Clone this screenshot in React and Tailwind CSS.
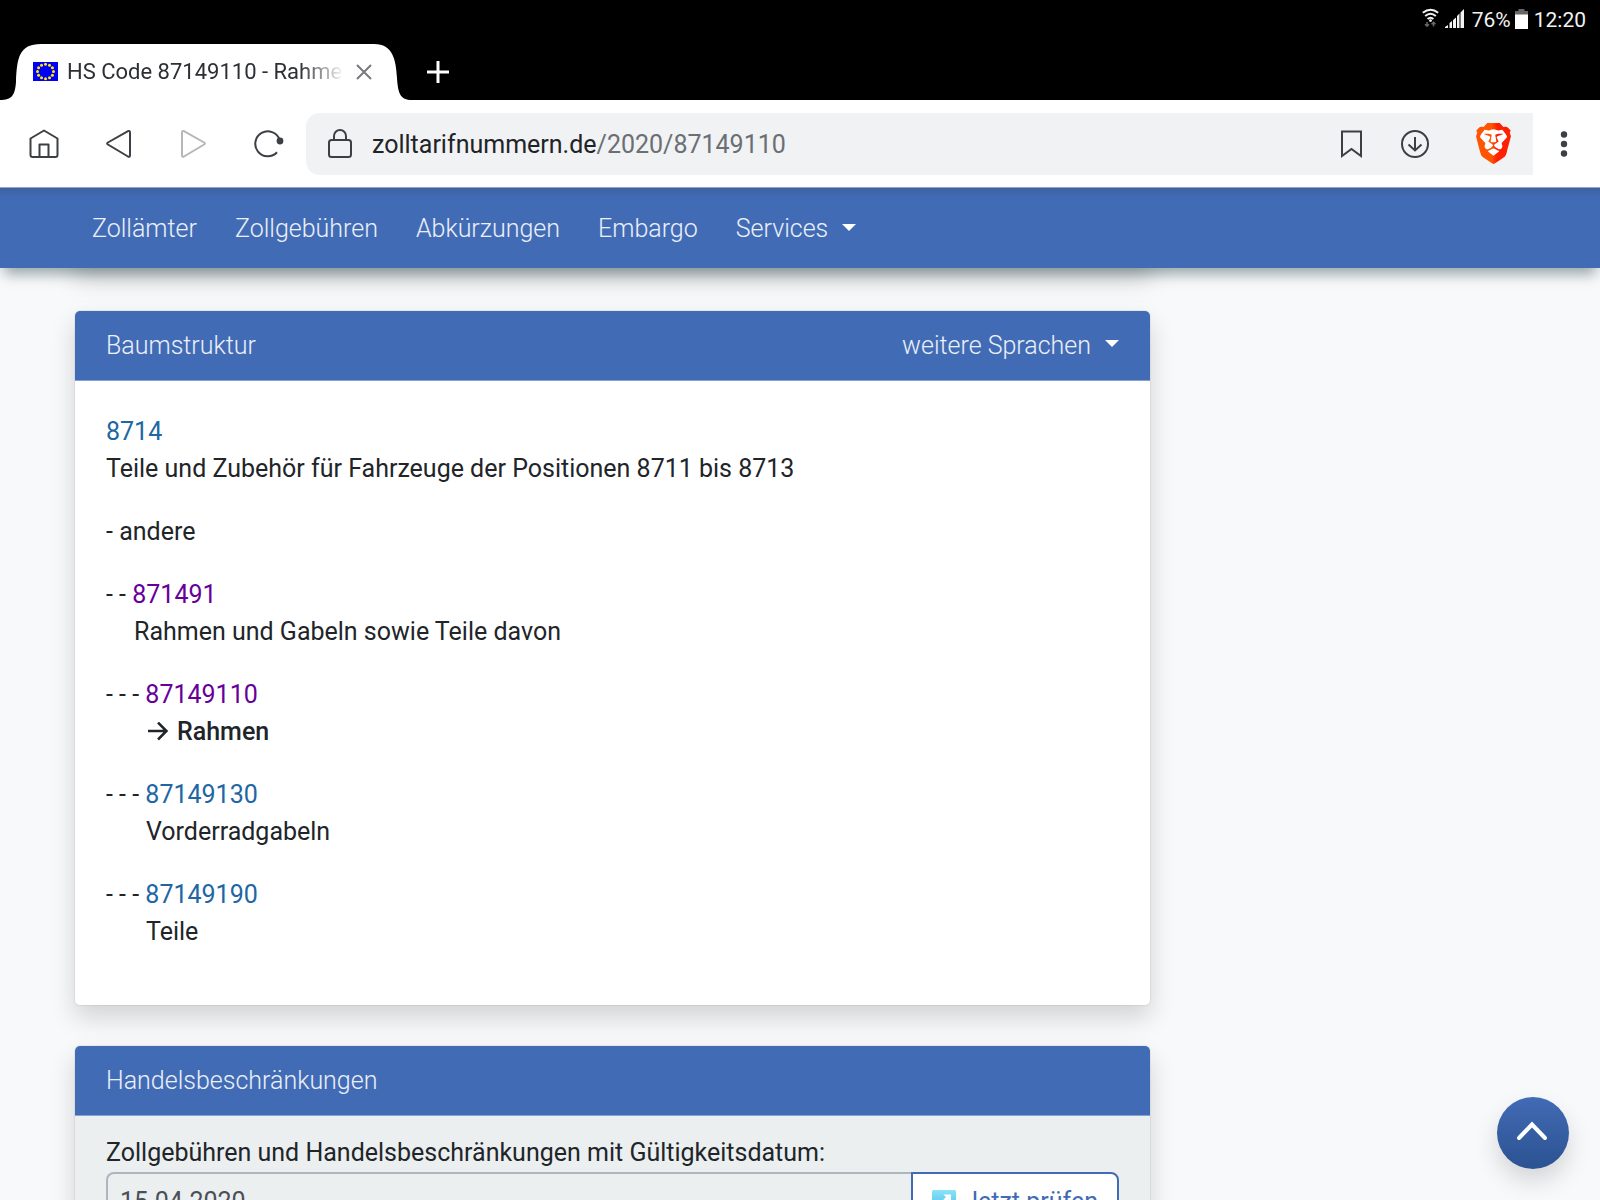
import { SiBrave } from 'react-icons/si';

const navItems = ['Zollämter', 'Zollgebühren', 'Abkürzungen', 'Embargo'];

const treeRows = [
  { prefix: '', code: '8714', text: 'Teile und Zubehör für Fahrzeuge der Positionen 8711 bis 8713', indent: 'pl-0' },
  { prefix: '-', text: 'andere' },
  { prefix: '- -', code: '871491', text: 'Rahmen und Gabeln sowie Teile davon', visited: true, indent: 'pl-7' },
  { prefix: '- - -', code: '87149110', text: 'Rahmen', visited: true, current: true, indent: 'pl-10' },
  { prefix: '- - -', code: '87149130', text: 'Vorderradgabeln', indent: 'pl-10' },
  { prefix: '- - -', code: '87149190', text: 'Teile', indent: 'pl-10' },
];

const Caret = () => <span className="mb-1 border-x-7 border-t-7 border-x-transparent border-t-white" />;

const EuFlag = () => (
  <svg width="25" height="19" viewBox="0 0 25 19" className="mb-0.5 shrink-0">
    <rect width="25" height="19" fill="#0000f5" />
    {Array.from({ length: 12 }, (_, i) => (
      <circle
        key={i}
        cx={12.5 + 8 * Math.sin((i * Math.PI) / 6)}
        cy={9.5 - 7.3 * Math.cos((i * Math.PI) / 6)}
        r="1.5"
        fill="#ffec00"
      />
    ))}
  </svg>
);

const StatusBar = () => (
  <div className="flex h-11 items-start justify-end pt-1 pr-3.5 text-[21px] leading-[32px] text-[#f2f2f2]">
    <svg width="17" height="20" viewBox="0 0 17 20" className="mt-1 mr-1.5" fill="none" stroke="#f2f2f2" strokeWidth="2">
      <path d="M0.8 4.8Q8.5-1.4 16.2 4.8M3.2 8Q8.5 3.4 13.8 8M5.6 11Q8.5 8.4 11.4 11" />
      <circle cx="8.5" cy="12.6" r="1.4" fill="#f2f2f2" stroke="none" />
      <path d="M5 14v4M3 16.3l2 2 2-2M11.5 18.5v-4M9.500 16.300l2-2 2 2" stroke="#666" strokeWidth="1.500" />
    </svg>
    <svg width="19" height="19" viewBox="0 0 19 19" className="mt-[5px] mr-2" fill="#f2f2f2">
      <path d="M0 19v-1l3-2v3zM4.500 19v-5l2.500-2v7zM8 19v-8l3-2.500V19zM12 19V7l2.500-2.500V19zM15.500 19V3.500L19 0v19z" />
    </svg>
    <span>76%</span>
    <svg width="13" height="20" viewBox="0 0 13 20" className="mt-[5px] mr-1.5 ml-1">
      <path d="M3.500 0h6v2H13v4H0V2h3.500z" fill="#666" />
      <path d="M0 5.500h13V20H0z" fill="#fff" />
    </svg>
    <span>12:20</span>
  </div>
);

const TabStrip = () => (
  <div className="flex h-14">
    <div className="relative flex w-103 items-center pl-[33px]">
      <svg className="absolute inset-0 h-full w-full" viewBox="0 0 412 56" preserveAspectRatio="none">
        <path d="M0 56C12 56 15 51 16 38C17 14 19 0 41 0H374C393 0 396 16 397 34C398 49 400 56 412 56Z" fill="#fff" />
      </svg>
      <div className="relative flex items-center">
        <EuFlag />
        <div className="ml-[9px] w-[277px] mask-r-from-84% text-[22px] leading-[30px] whitespace-nowrap text-[#2d2f33]">
          HS Code 87149110 - Rahme
        </div>
        <button aria-label="Tab schließen" className="ml-3">
          <svg width="16" height="16" viewBox="0 0 16 16" stroke="#777a7e" strokeWidth="2">
            <path d="M1 1l14 14M15 1L1 15" />
          </svg>
        </button>
      </div>
    </div>
    <button aria-label="Neuer Tab" className="ml-[15px]">
      <svg width="22" height="22" viewBox="0 0 22 22" stroke="#fff" strokeWidth="3">
        <path d="M11 0v22M0 11h22" />
      </svg>
    </button>
  </div>
);

const BraveLogo = () => (
  <span className="grid">
    <svg width="41" height="41" viewBox="0 0 24 24" className="col-start-1 row-start-1">
      <defs>
        <linearGradient id="brave" x1="0" x2="1">
          <stop offset="0.45" stopColor="#ff5500" />
          <stop offset="0.6" stopColor="#ff2000" />
        </linearGradient>
      </defs>
      <path d="M6 4h12l2 4-3 9-5 4-5-4-3-9z" fill="#fff" />
    </svg>
    <SiBrave size={41} style={{ fill: 'url(#brave)' }} className="col-start-1 row-start-1" />
  </span>
);

const Toolbar = () => (
  <div className="flex h-[87px] items-center bg-white pl-[29px] text-[#3c3f43]">
    <button aria-label="Startseite">
      <svg width="30" height="30" viewBox="0 0 30 30" fill="none" stroke="currentColor" strokeWidth="2" strokeLinejoin="round">
        <path d="M1.500 9.500 15 1.500l13.500 8V26a2 2 0 0 1-2 2h-23a2 2 0 0 1-2-2zM10.500 28V15.500h9V28" />
      </svg>
    </button>
    <button aria-label="Zurück" className="ml-[47px]">
      <svg width="26" height="30" viewBox="0 0 26 30" fill="none" stroke="currentColor" strokeWidth="2" strokeLinejoin="round">
        <path d="M22 2.200 1.900 13.500q-1.600 1 0 2L22 27.500q2 .9 2-1.300V3.500q0-2.200-2-1.300z" />
      </svg>
    </button>
    <button aria-label="Vorwärts" disabled className="ml-12 text-[#b5b7b9]">
      <svg width="26" height="30" viewBox="0 0 26 30" fill="none" stroke="currentColor" strokeWidth="2" strokeLinejoin="round">
        <path d="M4 2.200 24.100 13.500q1.600 1 0 2L4 27.500q-2 .9-2-1.300V3.500q0-2.200 2-1.300z" />
      </svg>
    </button>
    <button aria-label="Neu laden" className="ml-12">
      <svg width="30" height="28" viewBox="0 0 30 28" fill="none" stroke="currentColor" strokeWidth="2">
        <path d="M25.500 9.500A12.500 12.500 0 1 0 23 22.300" />
        <circle cx="26" cy="11" r="3.400" fill="currentColor" stroke="none" />
      </svg>
    </button>
    <div className="ml-[22px] flex h-[62px] flex-1 items-center rounded-l-[14px] bg-[#f1f2f4] pr-[19px]">
      <svg width="24" height="29" viewBox="0 0 24 29" className="ml-[22px]" fill="none" stroke="currentColor" strokeWidth="2">
        <rect x="1" y="11" width="22" height="17" rx="2.500" />
        <path d="M6 11V7a6 6 0 0 1 12 0v4" />
      </svg>
      <div className="ml-5 flex-1 pt-0.5 text-[25px] leading-[38px] text-[#6b6e73]">
        <span className="text-[#212327]">zolltarifnummern.de</span>/2020/87149110
      </div>
      <button aria-label="Lesezeichen">
        <svg width="21" height="28" viewBox="0 0 21 28" fill="none" stroke="currentColor" strokeWidth="2">
          <path d="M1 1.500h19V26l-9.500-7L1 26z" />
        </svg>
      </button>
      <button aria-label="Downloads" className="ml-[39px]">
        <svg width="28" height="28" viewBox="0 0 28 28" fill="none" stroke="currentColor" strokeWidth="2">
          <circle cx="14" cy="14" r="13" />
          <path d="M14 7v13.500M7.500 14.500l6.500 6 6.500-6" />
        </svg>
      </button>
      <button aria-label="Brave Shields" className="ml-11">
        <BraveLogo />
      </button>
    </div>
    <button aria-label="Menü" className="mr-8 ml-[27px]">
      <svg width="8" height="26" viewBox="0 0 8 26" fill="currentColor">
        <circle cx="4" cy="3.500" r="3.200" />
        <circle cx="4" cy="13" r="3.200" />
        <circle cx="4" cy="22.500" r="3.200" />
      </svg>
    </button>
  </div>
);

const Navbar = () => (
  <nav className="relative z-10 flex h-[81px] items-center gap-[38px] border-t border-[#8fa6cf] bg-[#416bb5] bg-linear-to-b from-[#3c629f] to-[#416bb5] to-12% pt-0.5 pl-[92px] font-light text-white/90 shadow-[0_10px_13px_-4px_rgba(0,35,35,0.4)]">
    {navItems.map((item) => (
      <a key={item} href="#">{item}</a>
    ))}
    <button className="flex items-center gap-3.5">
      Services <Caret />
    </button>
  </nav>
);

const Card = ({ title, action, children }) => (
  <section className="overflow-hidden rounded-md border border-black/5 bg-white bg-clip-padding shadow-[0_12px_25px_rgba(0,0,0,0.15)]">
    <header className="flex h-[70px] items-center justify-between border-b border-[#86a2d3] bg-[#416bb5] px-[31px] font-light text-white/90">
      <h2>{title}</h2>
      {action}
    </header>
    {children}
  </section>
);

const TreeRow = ({ row }) => (
  <li>
    <div>
      {row.prefix}{' '}
      {row.code ? (
        <a href="#" className={row.visited ? 'text-[#609]' : 'text-[#2066a3]'}>{row.code}</a>
      ) : (
        row.text
      )}
    </div>
    {row.code && (
      <div className={row.indent}>
        {row.current ? (
          <strong className="flex items-center gap-2 font-medium">
            <svg width="22" height="20" viewBox="0 0 22 20" className="ml-px" fill="none" stroke="currentColor" strokeWidth="2.500">
              <path d="M1 9h19M11 .5l8.500 8.500L11 17.500" />
            </svg>
            {row.text}
          </strong>
        ) : (
          row.text
        )}
      </div>
    )}
  </li>
);

const App = () => {
  return (
    <div className="flex h-screen flex-col overflow-hidden bg-[#f8f9fb] font-['Roboto',sans-serif] text-[25px] leading-[38px] text-[#212529]">
      <div className="shrink-0 bg-black">
        <StatusBar />
        <TabStrip />
        <Toolbar />
        <Navbar />
      </div>

      <main className="-mt-10 grid grid-cols-[minmax(0,1fr)_449px] pl-[74px]">
        <div className="flex flex-col gap-[39px]">
          {/* end of the previous card, scrolled under the navbar */}
          <section className="mb-[3px] h-10 bg-white shadow-[0_12px_25px_rgba(0,0,0,0.15)]" />

          <Card
            title="Baumstruktur"
            action={
              <button className="flex items-center gap-3.5">
                weitere Sprachen <Caret />
              </button>
            }
          >
            <ul className="flex flex-col gap-[26px] px-[31px] pt-8 pb-[55px] leading-[37px]">
              {treeRows.map((row, i) => (
                <TreeRow key={i} row={row} />
              ))}
            </ul>
          </Card>

          <Card title="Handelsbeschränkungen">
            <form className="bg-[#ebeff0] px-[31px] pt-[18px] pb-8" onSubmit={(e) => e.preventDefault()}>
              <label htmlFor="validity">Zollgebühren und Handelsbeschränkungen mit Gültigkeitsdatum:</label>
              <div className="flex h-[60px]">
                <input
                  id="validity"
                  defaultValue="15.04.2020"
                  className="min-w-0 flex-1 rounded-l-lg border-2 border-r-0 border-[#adb5bd] px-3 text-[#495057]"
                />
                <button className="flex items-center gap-2 rounded-r-lg border-2 border-[#416bb5] bg-white px-[19px] text-[#416bb5]">
                  <svg width="24" height="24" viewBox="0 0 24 24">
                    <defs>
                      <linearGradient id="check" x2="0" y2="1">
                        <stop stopColor="#8be3f6" />
                        <stop offset="1" stopColor="#3fb5e8" />
                      </linearGradient>
                    </defs>
                    <rect width="24" height="24" rx="1.500" fill="url(#check)" />
                    <path d="M11.500 4.500H19V12l-2.500-2.500L8.500 18 6 15.500 14 7z" fill="#fff" />
                  </svg>
                  Jetzt prüfen
                </button>
              </div>
            </form>
          </Card>
        </div>
      </main>

      <button
        aria-label="Nach oben"
        className="fixed right-[31px] bottom-[31px] z-20 flex size-[72px] items-center justify-center rounded-full bg-linear-to-b from-[#416bb5] to-[#2b5291] shadow-[0_12px_25px_rgba(0,0,0,0.15)]"
      >
        <svg width="32" height="20" viewBox="0 0 32 20" className="mr-0.5 mb-1" fill="none" stroke="#fff" strokeWidth="4" strokeLinecap="round">
          <path d="M3 17 16 3.500 29 17" />
        </svg>
      </button>
    </div>
  );
};

export default App;
